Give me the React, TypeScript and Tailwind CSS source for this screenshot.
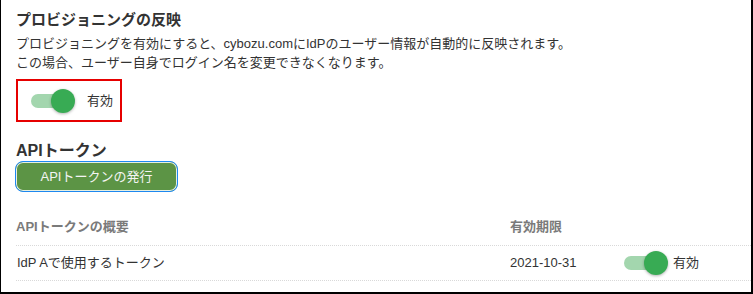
import React from "react";

function Toggle({ className = "" }: { className?: string }) {
  return (
    <div className={`relative w-[44px] h-6 shrink-0 ${className}`}>
      <div className="absolute left-0 top-[5px] h-[14px] w-[36px] rounded-full bg-[#a3d6ae]" />
      <div className="absolute left-[20px] top-0 h-6 w-6 rounded-full bg-[#38ab54] shadow-[0_1px_3px_rgba(0,0,0,0.3)]" />
    </div>
  );
}

export default function App() {
  return (
    <div className="w-[753px] h-[294px] overflow-hidden bg-white border-l border-r-2 border-b-2 border-black pl-[15px] text-[#333] font-['Liberation_Sans','Noto_Sans_CJK_JP',sans-serif]">
      <h2 className="pt-[9px] text-[15px] leading-[22px] font-bold text-[#333]">
        プロビジョニングの反映
      </h2>
      <p className="mt-[3px] text-[13px] leading-[19px] text-[#333]">
        プロビジョニングを有効にすると、cybozu.comにIdPのユーザー情報が自動的に反映されます。
        <br />
        この場合、ユーザー自身でログイン名を変更できなくなります。
      </p>
      <div className="mt-[7px] flex h-[43px] w-[106px] items-center border-2 border-[#e60000] pl-[13px]">
        <Toggle />
        <span className="ml-3 text-[13px] leading-none text-[#333]">有効</span>
      </div>
      <h3 className="mt-[18px] text-[16px] leading-[21px] font-bold text-[#333]">
        APIトークン
      </h3>
      <button className="-ml-px flex h-[31px] w-[163px] items-center justify-center rounded-[8px] border border-[#1e88f0] bg-[#5c9445] text-[13px] text-[#f4f4f4] shadow-[inset_0_0_0_1px_#e6efe2]">
        APIトークンの発行
      </button>
      <div className="mt-[24px] flex border-b border-dotted border-[#d9d9d9] pb-[7px] text-[13px] leading-[22px] font-bold text-[#7a7a7a]">
        <div className="w-[494px]">APIトークンの概要</div>
        <div>有効期限</div>
      </div>
      <div className="flex h-[35px] items-center border-b border-dotted border-[#d9d9d9] text-[13px] text-[#333]">
        <div className="w-[494px] pl-px">IdP Aで使用するトークン</div>
        <div className="w-[114px]">2021-10-31</div>
        <Toggle />
        <span className="ml-[5px]">有効</span>
      </div>
    </div>
  );
}
